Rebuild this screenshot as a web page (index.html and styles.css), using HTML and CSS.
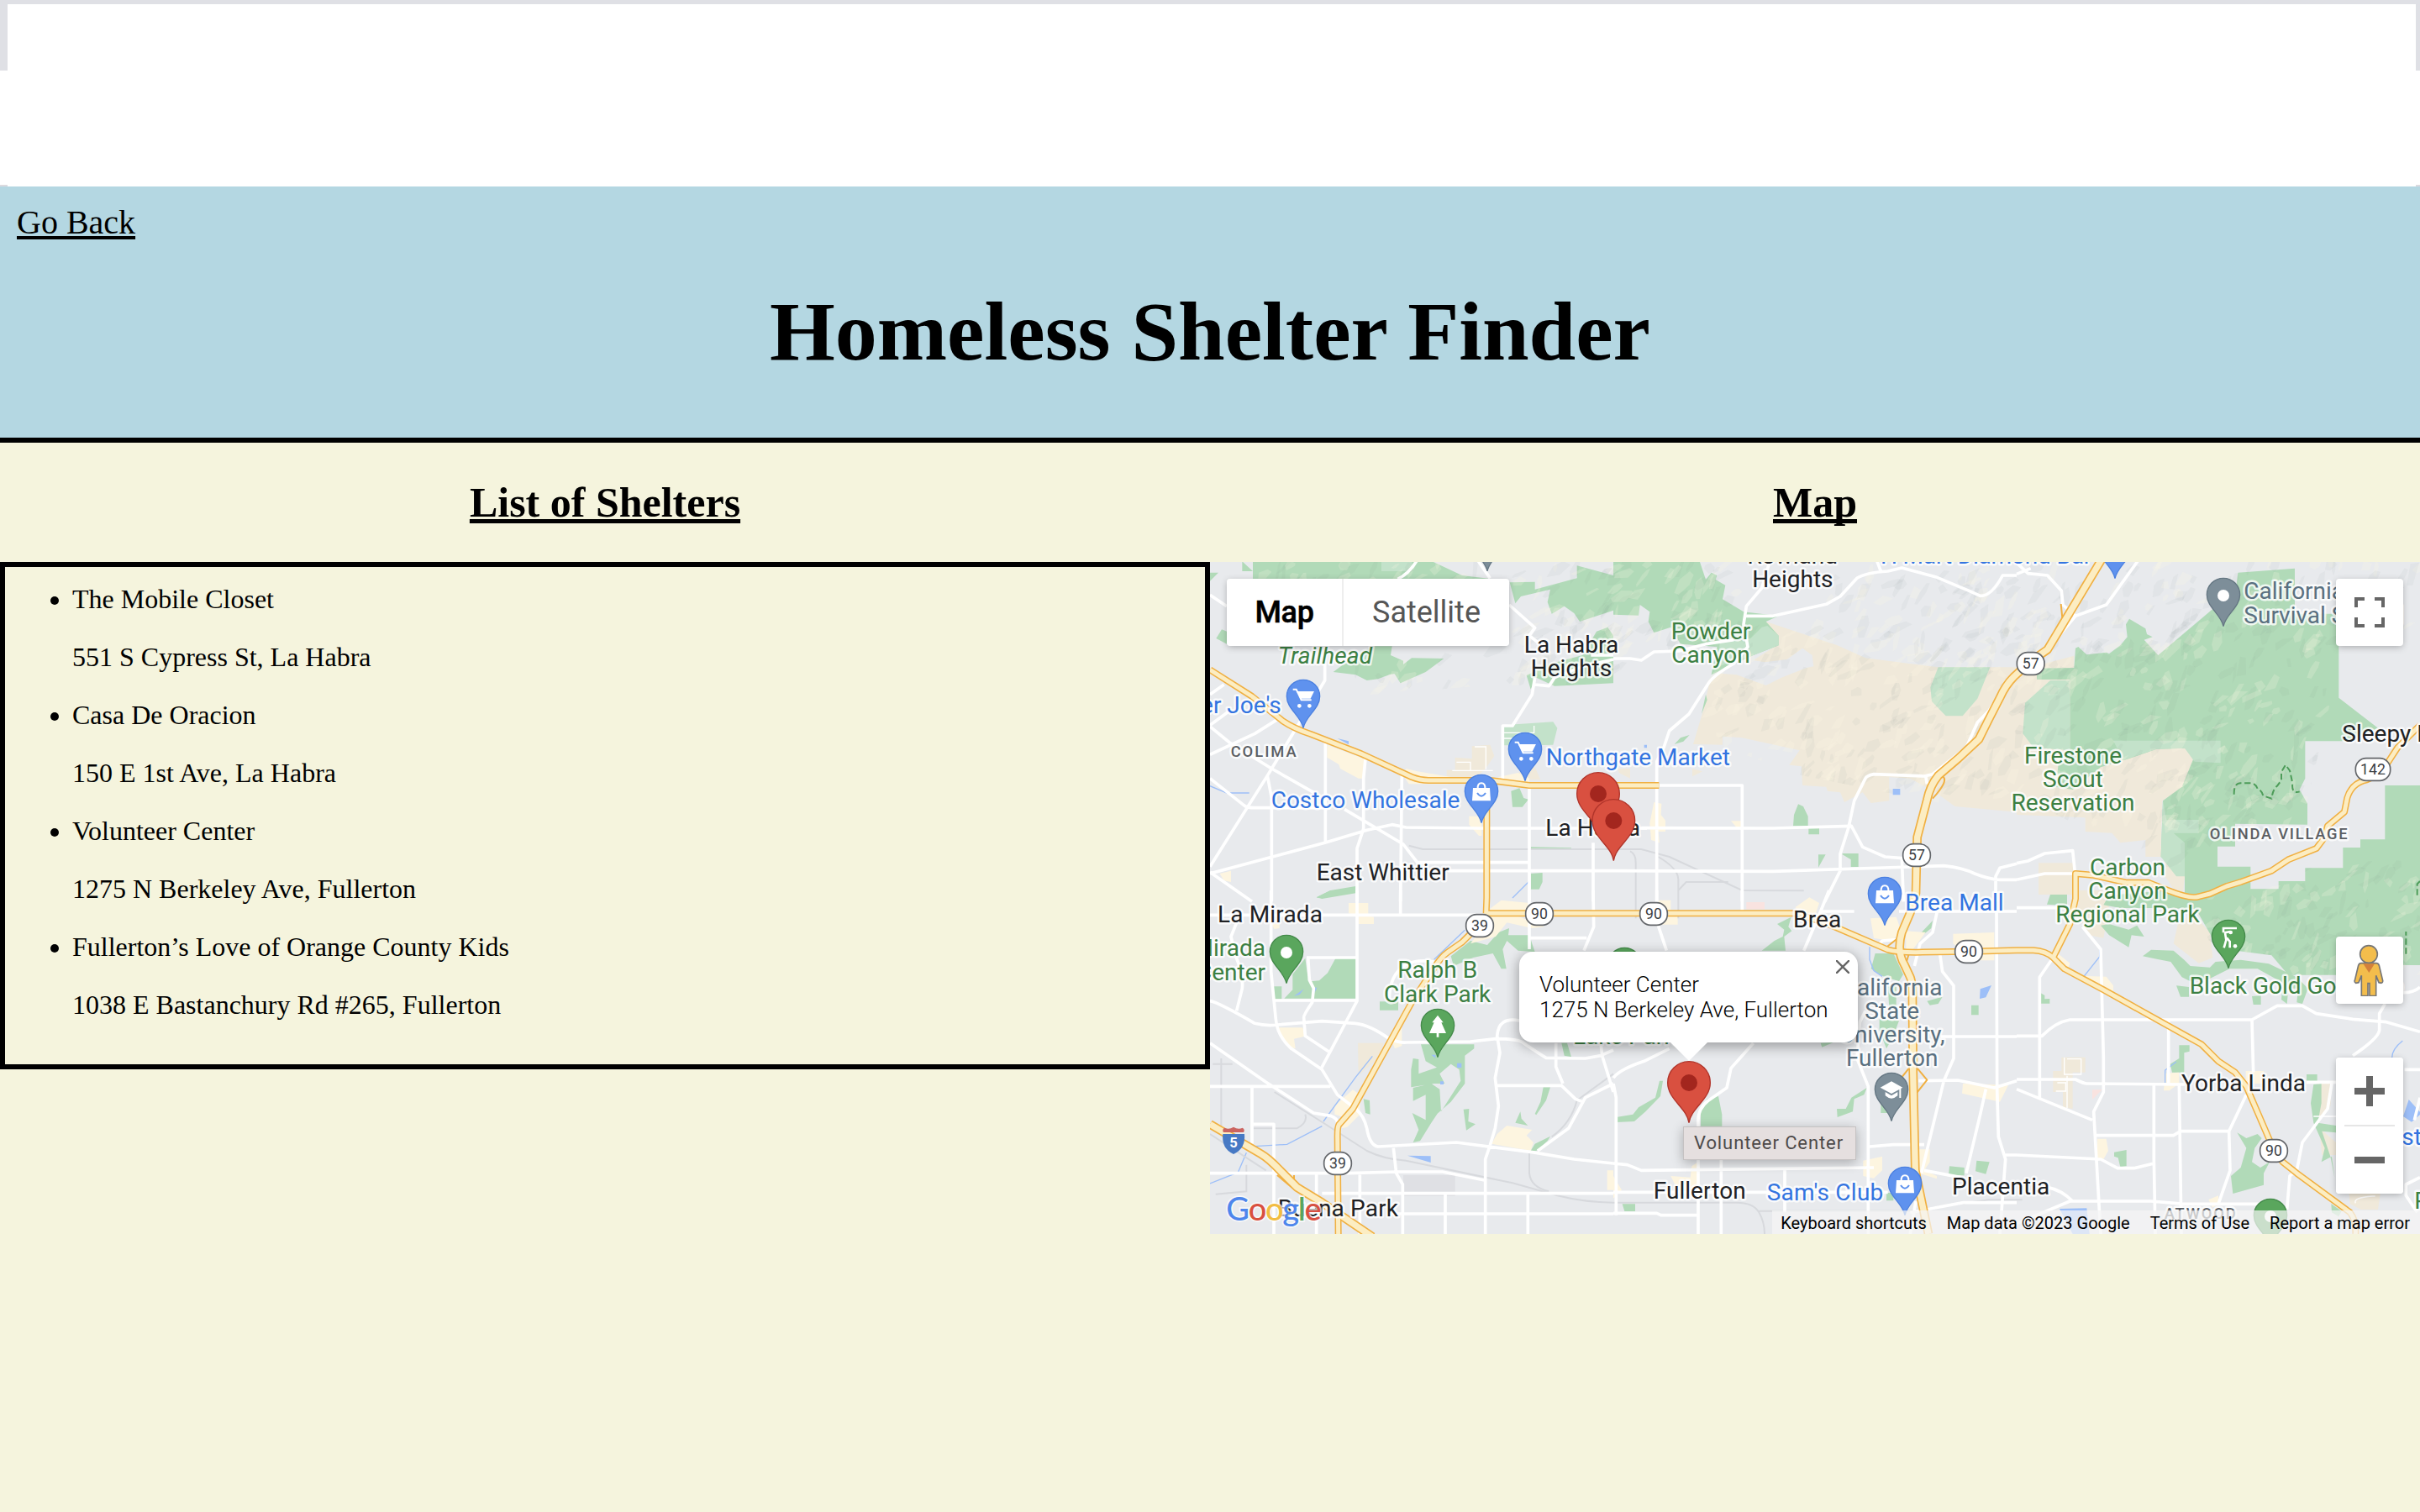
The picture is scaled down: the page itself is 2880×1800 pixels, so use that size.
FILE: index.html
```html
<!DOCTYPE html>
<html lang="en">
<head>
<meta charset="utf-8">
<title>Homeless Shelter Finder</title>
<link rel="stylesheet" href="styles.css">
</head>
<body>
<div class="chrome"><div class="chrome-tabs"></div><div class="chrome-bar"></div></div>
<header class="header">
  <a class="back" href="#">Go Back</a>
  <h1 class="title">Homeless Shelter Finder</h1>
</header>
<main class="columns">
  <section class="column">
    <h2 class="heading">List of Shelters</h2>
    <ul class="shelters">
      <li>The Mobile Closet<p>551 S Cypress St, La Habra</p></li>
      <li>Casa De Oracion<p>150 E 1st Ave, La Habra</p></li>
      <li>Volunteer Center<p>1275 N Berkeley Ave, Fullerton</p></li>
      <li>Fullerton’s Love of Orange County Kids<p>1038 E Bastanchury Rd #265, Fullerton</p></li>
    </ul>
  </section>
  <section class="column">
    <h2 class="heading">Map</h2>
    <div class="map">
      <svg class="map-canvas" viewBox="0 0 4320 2400">
        <defs>
          <clipPath id="hills">
            <path d="M0 0H4320V380L4000 500L3900 930L3400 1100L3000 890L2600 860L2100 760L1780 640L1500 440H1000L500 480L400 300L0 250Z"/>
            <path d="M4320 798H4195V991H4107V1020H4045V1093H3910V1140L3600 1190L3440 1240L3600 1380L3790 1405L3850 1475H4320Z"/>
          </clipPath>
          <path id="r-whittier" d="M0 385L150 480L260 568Q300 595 360 615L540 685L720 768Q750 780 780 780H1000L1140 798H1603"/>
          <path id="r-beach" d="M988 840V1200L986 1255"/>
          <path id="r-90" d="M985 1255H2090L2200 1290L2420 1385Q2450 1394 2520 1394L2710 1391L2880 1387H2940Q2985 1390 3010 1413L3050 1453L3190 1528L3540 1723L3600 1783L3660 1823L3700 1873L3780 2058Q3800 2110 3830 2143L3880 2183L4070 2323Q4092 2350 4090 2400"/>
          <path id="r-142" d="M3010 1413L3070 1293L3090 1203V1113L3150 1118L3270 1145H3350L3420 1173Q3500 1205 3530 1195L3570 1185L3630 1158L3680 1143L3790 1103L3850 1063L3950 1023L3980 983L3990 943L4050 893L4060 843Q4075 790 4130 778L4180 755L4240 663L4320 583"/>
          <path id="r-57" d="M3190 -20L3080 163L2990 313L2930 355L2870 410Q2840 440 2820 485L2780 563L2745 633L2670 703L2600 763Q2570 800 2560 850L2525 983L2520 1183L2500 1253L2470 1323Q2450 1390 2480 1440L2500 1483Q2508 1500 2508 1573L2510 1813L2518 2173L2565 2400"/>
          <path id="r-39" d="M960 1298L900 1358L850 1393Q825 1410 800 1450L720 1573L510 1953L460 2010Q455 2018 455 2050L458 2400"/>
          <path id="r-5" d="M0 2008L180 2113Q210 2130 250 2173L310 2233L400 2288L580 2410"/>
          <g id="cart"><path d="M-37-25H-25L-7 13H29M-23-15H34L24 5H-12" class="ico-line"/><path d="M-20-15H33L24 6H-12Z" class="ico"/><circle class="ico" cx="-14" cy="34" r="7"/><circle class="ico" cx="22" cy="34" r="7"/></g>
          <g id="bag"><path class="ico" d="M-30-12H30L33 34H-33Z"/><path class="ico-line" d="M-13-10Q-14-29 0-29T13-10"/><path class="bag-smile" d="M-15 6Q0 28 15 6"/></g>
          <path id="poi" d="M0 113C-8 70-59 45-59 0A59 59 0 0 1 59 0C59 45 8 70 0 113Z"/>
          <g id="marker"><path d="M0 143C-7 90-76 60-76 0A76 76 0 0 1 76 0C76 60 7 90 0 143Z"/><circle class="marker-dot" r="30"/></g>
        </defs>

        <!-- built-up areas -->
        <g class="tan">
          <path transform="translate(1440 -27)" d="M450 205L480 225L545 240L800 325L900 370L1160 403H1440V920L1220 900L1150 850L1060 800L985 795V880L920 888L890 850L825 885L810 850L765 845L760 830L675 825L672 757L628 752L665 700L460 655L390 650V680L285 678L320 560L345 450L380 425L440 430L545 468L600 440L690 405L715 400L710 360L675 335L620 375L540 385L500 378L590 320L560 270L435 240Z"/>
          <path transform="translate(2880 -27)" d="M0 430L100 390L205 362L205 405L320 640L640 700L600 830L520 880L515 1040L600 1150L590 1240L530 1150V1080H460V1020L370 1030L340 995L245 990V940L0 930ZM78 1102H205V1215H78Z"/>
          <path transform="translate(0 -27)" d="M845 770H875V725L935 730V685L1000 680L1015 720L980 770L940 800L845 795ZM1100 780L1160 760L1180 805H1100Z"/>
          <path transform="translate(1440 -27)" d="M15 765H60V800L20 780ZM282 765L318 775L282 793Z"/>
          <path transform="translate(2880 1173)" d="M205 0H340L310 170L260 160L230 110ZM580 100L640 95L690 150L700 240L650 260L560 190ZM160 596H245V650H200V780L165 775V720H130V645H160ZM1075 690H1125L1120 770L1060 830L1140 900V945H1090L1080 850ZM1185 1070H1300L1290 1140H1230L1190 1120Z"/>
          <path transform="translate(0 1173)" d="M528 545H620L600 600L530 660Z"/>
        </g>
        <g class="green">
          <path transform="translate(0 -27)" d="M153 0H740L900 75L1000 87H153ZM115 25L153 60H115ZM0 65H30L0 95ZM1070 100L1160 98V125L1310 85V40L1440 75V200L1320 240L1300 210L1265 185L1220 212L1205 170L1215 125L1110 150L1090 175ZM440 420L500 375L580 328H650L645 360L690 380L690 420L640 430L600 445L560 450L520 430ZM655 420L720 370L835 372L770 420L680 460ZM22 300L42 268L60 275V320ZM1130 432L1210 392L1330 360L1380 275L1420 260L1440 290V460L1230 470L1165 440L1145 482ZM1075 845L1105 835L1120 870L1137 875L1115 902H1080ZM1146 1140L1187 1137V1170L1175 1196H1146ZM380 1225L430 1200L520 1185V1210L400 1230ZM1145 1045L1290 1048V1053H1145Z"/>
          <path transform="translate(1440 -27)" d="M0 0H300L330 90L350 65L370 75L365 90L400 110L390 160L465 205L590 220L545 240L590 290V325L500 360L350 430L370 330L240 320L205 260L145 280L125 240L130 205L95 180L90 218L0 215ZM642 970L645 930L660 892L678 900L695 935V970H735V1000H697V970ZM732 1072H758L732 1118ZM818 1068H875V1116H848V1090L818 1072ZM315 570L330 500L335 520ZM218 678L240 655L272 645L250 668Z"/>
          <path transform="translate(2880 -27)" d="M205 405L210 335L220 330L250 358L320 350L330 355L370 325L395 295L390 250L402 230L460 265L465 285L485 295L455 305L505 360L700 195L780 150L790 65L993 50V212H1150V512L1290 620L1180 667H1030V800L1010 840L1038 890V965L780 962V1043L717 1043V1115H835V1195L700 1240H600V1150L515 1080L522 880L590 830L635 720L600 692L500 695L400 730L300 760L200 840L140 830L150 740L190 690V447H72V407Z"/>
          <path d="M4320 798H4195V991H4107V1020H4045V1093H3910V1140H3815V1168H3700L3560 1210L3400 1175L3210 1190L3190 1225L3250 1236H3400L3520 1240L3600 1380L3790 1405L3850 1475L4020 1475V1440H4320Z"/>
          <path transform="translate(2880 1173)" d="M300 125L330 120L400 140L430 125L455 165L410 160L400 203L330 160ZM450 235L480 212L560 215L600 250L620 270L690 275L710 255L800 248L900 262L1000 310L1040 350L1020 405L1000 400L1005 350L970 350L965 405L945 390L950 330L860 280L760 280L690 315L620 325L590 310L550 255L500 245ZM570 340L615 345V380H585ZM840 378L872 376V408H845ZM85 366L100 375V388L118 387V404H87ZM120 15H180V54L108 50ZM580 553H617V575L598 580V650H555L548 620L580 600ZM787 865L820 885L860 870L875 885L850 920L840 970L870 990L903 970L882 1010V1052L772 1083L765 1020L800 990L820 920ZM348 935L392 927V985L370 988L362 955L348 950ZM1035 657H1073V685H1035ZM1060 693L1088 690V760L1075 830L1140 840V865L1090 860L1120 950L1135 1025L1125 950L1088 970L1100 920L1060 830L1050 760ZM1123 1120L1160 1145L1150 1165L1125 1150Z"/>
          <path transform="translate(0 1173)" d="M340 242L348 300L360 325L390 322L420 295L448 243H522V386H265L295 355V300ZM226 343H256V388H226ZM606 397H672V428H606ZM860 235L930 180L990 195L1030 150L1068 135L1065 160H1140L1160 220L1100 215L1060 180L1045 210L1058 280L1040 280L1010 225L940 240L870 270ZM753 550H943V565L910 590V690L860 755L812 797L790 830L750 895L725 900L745 855L722 795L770 820V730L725 752V705L790 690L820 710L825 790L895 680L890 640L860 620L820 655L838 690L800 690L718 703V640L725 600L745 603V655L810 632L770 610ZM548 745L570 750L572 800L555 795ZM905 782L925 780L922 825L948 835L915 857ZM1090 830L1108 790L1112 815L1135 840ZM1190 703H1215L1200 750L1165 802L1160 798L1180 755ZM1145 930L1160 905L1215 878L1205 895L1165 930ZM1255 545H1275L1290 595L1265 590ZM380 25L430 0H520V5L400 28Z"/>
          <path transform="translate(1440 1173)" d="M585 120L635 95L625 130L637 145L610 165L615 215H530L575 180L605 165L610 140ZM1100 150L1140 108L1135 135L1110 155ZM920 280L935 225H1000L1035 300L1020 325L960 305ZM1120 395L1175 380L1160 405L1130 410ZM1278 410H1304V445H1278ZM950 460L1020 465L1000 520L975 565L950 500ZM980 340H1010V420H985ZM798 780H830L850 740L905 705L895 730L860 745L855 790L800 810ZM740 545L785 543L745 560ZM955 745H995V795H955ZM312 785L335 745L375 735L388 800V842H312ZM10 810L70 800L90 775L150 740L165 680H177L168 735L115 790L75 825L10 828ZM1200 985L1253 990V1018H1197ZM1297 965L1343 970L1330 1013L1293 1003ZM32 1120H78V1146H40ZM975 1080H1000V1108H975Z"/>
        </g>
        <g class="green-lit">
          <path transform="translate(1440 -27)" d="M1160 403H1345L1300 515L1247 577H1187L1137 525L1132 475ZM550 255L590 290V325L500 360L375 400L380 310L490 300L530 260Z"/>
          <path transform="translate(2880 -27)" d="M120 450H190V700L60 690L22 640L30 530ZM345 665H728V745L635 740L600 692L500 695L380 735ZM522 880L535 948H650V995H560L600 1030V1150L570 1150L515 1080Z"/>
          <path transform="translate(0 -27)" d="M612 0H720L720 60H612ZM1045 610L1225 598L1240 620L1225 680L1160 682H1045Z"/>
        </g>
        <g class="cream">
          <path transform="translate(0 -27)" d="M418 680L550 730L548 800L530 800L465 765L460 750L418 725ZM700 765L740 775L860 795L850 820H710L690 790ZM1030 795L1100 780L1140 800V825L1030 815ZM925 935H970V1005H960L925 965ZM35 1140L75 1130V1170L50 1165Z"/>
          <path transform="translate(1440 -27)" d="M145 885L172 890L170 930L186 950V990L160 990L165 1030L135 1020L130 960ZM420 952H465V970L440 975Z"/>
          <path transform="translate(0 1173)" d="M495 45H565V90L585 95V120H530V90L495 82ZM1000 65L1040 35L1140 45V70L1000 95ZM1000 95L1080 85L1195 130L1150 135L1060 115L1020 165L930 190L950 165L1000 160ZM245 490H330L345 520L300 530L305 565L280 560L255 520ZM445 770L510 712L535 730V800L490 845L470 850L480 810L445 800ZM645 530L685 490V555L660 565ZM1005 905L1025 870L1060 840L1150 855L1130 875L1155 900L1145 930ZM220 120H248V135L230 138ZM1418 1000H1440V1070H1418Z"/>
          <path transform="translate(1440 1173)" d="M650 60L700 25L735 45L720 90L655 75ZM918 100L1010 95L1030 150L990 180L930 170ZM1045 145L1115 150L1070 210L1045 215ZM1213 155L1360 150V250L1290 250L1213 190ZM160 35H205V90H230V122H170ZM1248 690L1410 695L1380 755L1245 725ZM892 965L960 950V1000L930 1028L892 1020ZM1085 925H1130V970L1110 1000L1155 1020V1030L1090 1010ZM205 1020L275 1025L280 985L303 970V1070H230ZM0 1020L30 1070L0 1100Z"/>
          <path transform="translate(2880 1173)" d="M225 305L320 308L345 340V370L240 320ZM140 220L190 260L180 290L130 250ZM530 653L580 650V690L545 715H525ZM818 645H882V690H818ZM288 887H320L327 930L310 960L288 955ZM685 1105L720 1090V1120L700 1133Z"/>
        </g>
        <g class="pink"><path d="M1915 1215H1980V1240H1915ZM3150 1885H3185L3150 1920Z"/></g>
        <g id="relief" clip-path="url(#hills)"></g>
        <g class="water"><path d="M2438 810H2464V832H2438ZM3033 2310L3130 2308L3140 2400H3080ZM705 2120L788 2122V2145ZM1550 653H1560V664H1550ZM300 1550L335 1525L320 1545ZM365 1520H382L370 1545ZM2750 1525L2790 1512L2770 1555L2748 1560ZM4280 1920L4325 1970L4290 2000L4260 1980ZM790 1760H805V1772ZM882 1790H898V1806H882ZM822 1855H834V1866H822ZM455 630L495 640V652Z"/></g>
        <g class="stream"><path d="M405 1998L520 1840L580 1765M130 2110L100 2180L0 2220M160 2087L275 2080L400 2015M800 1420L910 1315M3120 1480L3176 1410V1375M4220 1770Q4220 1740 4258 1710M3410 1860V1815L3450 1785M2355 1375V1420L2370 1460L2400 1480M0 800L60 825H140M1080 1200L1140 1140"/></g>

        <g class="rail">
          <path transform="translate(0 -27)" d="M710 1040L760 1053H1540L1640 1080L1900 1200L2120 1201M1500 1060Q1520 1070 1520 1100V1300M1600 1080Q1670 1120 1672 1160V1300M1672 1200L1700 1170H1850"/>
          <path transform="translate(0 1173)" d="M230 720L420 840L560 930Q620 960 700 965L1080 1045L1240 1090Q1340 1115 1440 1115H1880Q1940 1115 1960 1150T1980 1227M1140 935V1010Q1145 1060 1210 1075M1440 655L1310 750Q1290 830 1220 880M40 600V840M80 620L10 620M155 850H310Q350 830 340 800M0 870L200 1000M130 980V1075L20 1085M1960 1145H2500L2780 1105H2900"/>
        </g>
        <rect class="block" x="690" y="2190" width="185" height="75"/>

        <g class="road">
          <path transform="translate(0 -27)" d="M0 145L60 185M740 20Q710 70 670 88M955 20L1000 85M1068 180L1160 262L1140 290L1190 330M1440 360L1360 360M1160 440L1150 500L1080 612H1045V805M1160 465L1210 470L1230 440L1330 400L1440 375M410 390V450L320 600L205 790L0 1115M0 500L50 465M0 610L75 555M0 715L160 640L240 590M0 615L70 672L220 765L370 850M0 800L120 895Q130 905 160 905H430M205 790L220 870V1240M412 665V1025M555 730L548 800V980L525 1050V1240M685 790L680 1240M0 1140L410 1030L560 985L650 965L700 975L960 978H1560M480 910L690 1035L740 1100H1140M850 1130H1440M1140 830V1240M1368 1030V1240M0 1135L150 1240"/>
          <path transform="translate(1440 -27)" d="M560 20L530 120L475 185L465 250L480 330L430 390Q360 430 340 460L270 570L200 630L180 690L155 740V1240M0 372H60L100 378L145 348L235 345L330 320L430 305M465 220H570L760 178L810 150L870 85Q900 65 980 60L1030 48L1150 80L1270 130L1310 148Q1350 150 1390 75H1440M940 20L955 60M1440 430L1390 480L1340 560L1300 600L1260 690L1140 785L1110 792L930 785Q905 790 900 800L860 880L840 975L810 1070V1130L755 1240M165 825H460V1240M100 977L570 978L850 970L890 1045L970 1080L1030 1085L1036 1240M0 1130L570 1132L1180 1112Q1250 1120 1290 1140Q1340 1160 1380 1162H1440M1115 790L1120 820M1440 1105L1380 1120L1365 1150V1240"/>
          <path transform="translate(2880 -27)" d="M0 30L40 68L110 75L160 130L165 180L210 220L320 180L435 20M0 70L50 50M210 220L160 280M0 1103L40 1095L100 1068L200 1058L208 1135M0 1162L100 1140H200"/>
          <path transform="translate(0 1173)" d="M0 88H985M95 115L75 165L90 230Q120 300 115 350L95 430M218 0V290L235 460Q240 520 290 565L400 640L455 730L520 780Q550 805 560 850Q570 910 600 915L880 900L1150 935L1300 960L1440 975M525 0V395L480 480L395 640M345 240H525M225 393H525M350 240L355 320L370 350L365 400Q330 450 335 455L340 520L430 580M0 395Q30 400 160 475Q200 485 240 480L400 467L520 475Q570 480 640 530Q680 545 700 543L930 540L1020 530Q1100 530 1120 545T1200 598L1340 600L1395 590L1440 570M680 0V85M640 390Q640 300 700 265Q740 245 800 255M1140 0V210M1140 170H1345M1368 0L1370 130L1335 215M0 545L200 685L370 795L430 805Q460 815 455 840M0 700H430M150 700V905M155 835H228V1227M0 1010H500L670 1005H830L980 1035M655 920L665 1010L688 1050V1227M380 1010V1227M535 1010V1227M400 1082H1440M640 1155H1440M840 1082V1227M1000 910L983 960V1227M1135 1082V1227M1105 465Q1030 450 1025 520L1035 580L1018 670L1030 770L1018 850L1000 910M1025 697H1255L1305 745L1330 755M1235 545V630L1260 690M1395 545L1400 590L1440 720M1440 690L1340 740L1280 850L1170 930"/>
          <path transform="translate(1440 1173)" d="M155 0V110L190 215M460 0V75M770 0L740 75L680 215M740 75H860M1020 75H1440M0 670Q20 640 110 610L200 565M500 545L420 635L405 705L340 750Q300 780 303 830V1227M385 950V1227M0 690L10 740V1160M0 975L50 980L100 1000L930 990M0 1078H980M0 1153H155L170 1160H305M612 1000V1150M910 1227V700L870 600L880 470L900 430M1155 80L1140 150L1095 190L1075 270M940 205L960 180L1020 175M1165 220L1175 290L1215 340V600L1180 680L1100 1010M1368 80L1370 710M1440 522H1170M1090 680L1230 678L1360 705L1440 680M1330 710L1310 800L1260 1010M1370 710L1375 880L1400 960L1380 1227M1440 945H1400M915 915L1000 908H1110M1110 1000L1240 1025M1060 1150L1250 1115H1440M1060 1227L1080 1110"/>
          <path transform="translate(2880 1173)" d="M0 62H160M235 130L300 210L310 600V720L275 790L300 1227M130 240L82 310V740M0 520H90Q140 470 190 462H840L930 412H1020L1070 440L1200 460L1320 470L1440 505M1315 405L1295 440V500Q1290 530 1200 590M1380 365Q1420 365 1440 345M542 465V690M840 460L845 650M0 675H210Q240 690 250 690L600 693M1035 685H1140M0 710L270 820M280 875H560L585 860H758M820 730L758 860L762 1000L720 1120M490 693V960L495 1227M580 690L588 1227M0 945L300 960L360 992H420L490 975M1125 690L1110 780L1020 900L1000 1000L975 1020L965 1140M1385 640H1440M1440 740L1420 820M110 1060Q160 1070 200 1110M0 1190L190 1110H480L600 1120H880M1440 1025L1390 1050V1090L1430 1150"/>
        </g>
        <g class="lane"><path d="M1048 610H1157V585M1048 630H1157M865 745H1010M880 715H930V745M945 660H985V740M3050 1770V1830H3110V1775H3060M3025 1860H3055V1890H3020M3060 1835V1950M3940 1980H4020M4090 2290Q4080 2270 4150 2265H4160"/></g>

        <g class="hwy-edge"><use href="#r-whittier"/><use href="#r-beach"/><use href="#r-142"/><use href="#r-90"/><use href="#r-39"/><path d="M2615 765Q2640 780 2580 845M3038 150L3045 220M2410 1380L2460 1340M2495 1400L2480 1450M2470 1840L2510 1790L2560 1850L2520 1900M240 2190L300 2240V2190"/></g>
        <g class="hwy-edge wide"><use href="#r-57"/><use href="#r-5"/></g>
        <g class="hwy"><use href="#r-whittier"/><use href="#r-beach"/><use href="#r-142"/><use href="#r-90"/><use href="#r-39"/></g>
        <g class="hwy wide"><use href="#r-57"/><use href="#r-5"/></g>
        <path class="trail" d="M3656 830Q3655 790 3680 790H3720Q3735 795 3740 810Q3755 815 3760 835L3790 845Q3795 810 3810 800L3825 780V750L3840 725L3855 745L3865 790Q3860 830 3890 820M4310 1190V1150L4320 1140M4270 1400V1320"/>

        <!-- labels -->
        <g class="label">
          <g class="park">
            <text class="it" x="242" y="363" textLength="337">Trailhead</text>
            <text class="mid" x="1788" y="275">Powder</text><text class="mid" x="1788" y="359">Canyon</text>
            <text class="mid" x="3081" y="719">Firestone</text><text class="mid" x="3081" y="803">Scout</text><text class="mid" x="3081" y="887">Reservation</text>
            <text class="mid" x="3276" y="1118">Carbon</text><text class="mid" x="3276" y="1202">Canyon</text><text class="mid" x="3276" y="1286">Regional Park</text>
            <text class="end" x="198" y="1408">La Mirada</text><text class="end" x="198" y="1493">Golf Center</text>
            <text class="mid" x="812" y="1486">Ralph B</text><text class="mid" x="812" y="1571">Clark Park</text>
            <text x="1296" y="1723">Lake Park</text>
            <text x="3497" y="1541">Black Gold Golf Club</text><text x="4300" y="2311">P</text>
          </g>
          <g class="shop">
            <text class="end" x="254" y="539">Trader Joe's</text>
            <text x="218" y="878" textLength="674">Costco Wholesale</text>
            <text x="1199" y="727" textLength="658">Northgate Market</text>
            <text x="2394" y="5" textLength="754">H Mart Diamond Bar</text>
            <text x="2482" y="1244" textLength="352">Brea Mall</text>
            <text x="1988" y="2279" textLength="416">Sam's Club</text>
            <text x="4255" y="2081">st</text>
          </g>
          <g class="civic">
            <text x="3691" y="133">California</text><text x="3691" y="218">Survival School</text>
            <text class="mid" x="2435" y="1547">California</text><text class="mid" x="2435" y="1631">State</text><text class="mid" x="2435" y="1716">University,</text><text class="mid" x="2435" y="1800">Fullerton</text>
          </g>
          <g class="city">
            <text class="mid" x="1290" y="325">La Habra</text><text class="mid" x="1290" y="409">Heights</text>
            <text x="380" y="1136" textLength="474">East Whittier</text>
            <text x="1198" y="978" textLength="338">La Habra</text>
            <text class="mid" x="2080" y="5">Rowland</text><text class="mid" x="2080" y="89">Heights</text>
            <text x="4042" y="643">Sleepy Hollow</text>
            <text x="27" y="1286" textLength="375">La Mirada</text>
            <text x="242" y="2336" textLength="430">Buena Park</text>
            <text x="2082" y="1304" textLength="172">Brea</text>
            <text x="1583" y="2274" textLength="330">Fullerton</text>
            <text x="2649" y="2259" textLength="349">Placentia</text>
            <text x="3468" y="1891" textLength="444">Yorba Linda</text>
          </g>
          <g class="hood">
            <text x="74" y="696" textLength="234">COLIMA</text>
            <text x="3569" y="991" textLength="492">OLINDA VILLAGE</text>
            <text x="3407" y="2345" textLength="255">ATWOOD</text>
          </g>
        </g>

        <g class="shield">
          <rect x="2474" y="1007" width="98" height="80" rx="38"/><text x="2523" y="1066">57</text>
          <rect x="2881" y="323" width="98" height="80" rx="38"/><text x="2930" y="382">57</text>
          <rect x="4090" y="701" width="124" height="80" rx="38"/><text x="4152" y="760">142</text>
          <rect x="914" y="1259" width="98" height="80" rx="38"/><text x="963" y="1318">39</text>
          <rect x="1127" y="1217" width="98" height="80" rx="38"/><text x="1176" y="1276">90</text>
          <rect x="1535" y="1217" width="98" height="80" rx="38"/><text x="1584" y="1276">90</text>
          <rect x="2660" y="1352" width="98" height="80" rx="38"/><text x="2709" y="1411">90</text>
          <rect x="3749" y="2063" width="98" height="80" rx="38"/><text x="3798" y="2122">90</text>
          <rect x="407" y="2108" width="98" height="80" rx="38"/><text x="456" y="2167">39</text>
        </g>
        <g class="interstate"><path class="is-red" d="M48 2037Q42 2027 52 2021Q68 2028 84 2018Q100 2028 116 2021Q126 2027 120 2037Z"/><path class="is-blue" d="M46 2043H123Q128 2095 84 2115Q40 2095 46 2043Z"/><text x="84" y="2092">5</text></g>

        <g class="poi-blue">
          <g transform="translate(333 480)"><use href="#poi"/><use href="#cart"/></g>
          <g transform="translate(1125 669)"><use href="#poi"/><use href="#cart"/></g>
          <g transform="translate(969 819)"><use href="#poi"/><use href="#bag"/></g>
          <g transform="translate(2409 1185)"><use href="#poi"/><use href="#bag"/></g>
          <g transform="translate(2481 2220)"><use href="#poi"/><use href="#bag"/></g>
          <use href="#poi" transform="translate(3231 -54)"/>
        </g>
        <g class="poi-grey">
          <use href="#poi" transform="translate(990 -80)"/>
          <g transform="translate(3618 117)"><use href="#poi"/><circle class="ico" cy="3" r="21"/></g>
          <g transform="translate(2433 1884)"><use href="#poi"/><path class="ico" d="M-40-7L0-29L40-7L0 15ZM-22 9L0 22L22 9V22Q0 42-22 22ZM28-3H34V30H28Z"/></g>
        </g>
        <g class="poi-green">
          <g transform="translate(273 1392)"><use href="#poi"/><circle class="ico" cy="3" r="21"/></g>
          <g transform="translate(813 1656)"><use href="#poi"/><path class="ico" d="M0-37L20-11H13L30 27H4V41H-4V27H-30L-13-11H-20Z"/></g>
          <g transform="translate(3636 1338)"><use href="#poi"/><path class="golf" d="M-18-14V-30H30M-14-14L6-18M-12-14L-8 12L-16 40M-6 4L5 18V40"/><circle class="ico" cx="8" cy="-15" r="7"/><circle class="ico" cx="24" cy="34" r="7"/></g>
          <g transform="translate(1480 1437)"><use href="#poi"/></g>
          <g transform="translate(3786 2334)"><use href="#poi"/><circle class="ico" cy="3" r="21"/></g>
        </g>
        <g class="marker">
          <use href="#marker" transform="translate(1386 828)"/>
          <use href="#marker" transform="translate(1441 924)"/>
          <use href="#marker" transform="translate(1710 1860)"/>
        </g>
        <text class="logo" x="58" y="2351" textLength="340"><tspan class="g-b">G</tspan><tspan class="g-r">o</tspan><tspan class="g-y">o</tspan><tspan class="g-b">g</tspan><tspan class="g-g">l</tspan><tspan class="g-r">e</tspan></text>
      </svg>

      <div class="types"><button class="type active">Map</button><button class="type">Satellite</button></div>
      <button class="control fullscreen" aria-label="Fullscreen"><svg width="36" height="36" viewBox="0 0 36 36"><path class="fs" d="M2 12V2H12M24 2H34V12M34 24V34H24M12 34H2V24"/></svg></button>
      <button class="control pegman" aria-label="Street View"><svg width="36" height="62" viewBox="0 0 108 186"><path class="peg" d="M27 68H81Q88 68 91 76L104 130Q105 137 99 139L90 137L80 112V185H57V140H51V185H28V112L18 137L8 139Q2 136 4 130L17 76Q20 68 27 68Z"/><path class="peg-scarf" d="M34 70H75L55 102Z"/><circle class="peg" cx="54" cy="36" r="31"/></svg></button>
      <div class="zoom"><button class="zoom-btn" aria-label="Zoom in"><svg width="36" height="36" viewBox="0 0 36 36"><path class="zi" d="M0 14H14V0H22V14H36V22H22V36H14V22H0Z"/></svg></button><hr class="zoom-rule"><button class="zoom-btn" aria-label="Zoom out"><svg width="36" height="36" viewBox="0 0 36 36"><path class="zi" d="M0 14H36V22H0Z"/></svg></button></div>

      <div class="info">Volunteer Center<br>1275 N Berkeley Ave, Fullerton
        <svg class="info-close" width="16" height="16" viewBox="0 0 16 16"><path d="M0 0L16 16M16 0L0 16"/></svg>
      </div>
      <div class="tip">Volunteer Center</div>
      <div class="credits"><span>Keyboard shortcuts</span><span>Map data ©2023 Google</span><span>Terms of Use</span><span>Report a map error</span></div>
    </div>
  </section>
</main>
<script src="relief.js"></script>
</body>
</html>
```
FILE: relief.js
```js
// Scatters small light and dark facets over the hills, leaning along the ridges.
(function () {
  var seed = 7;
  function rnd() { seed = (seed * 16807) % 2147483647; return seed / 2147483647; }
  var layer = document.getElementById('relief');
  // x, y, width, height, facet count
  var zones = [
    [150, 0, 800, 120, 40], [1000, 20, 500, 420, 60], [1400, 0, 500, 300, 70],
    [1780, 230, 1100, 620, 230], [2650, 0, 900, 360, 110], [2880, 300, 1100, 640, 230],
    [3350, 750, 500, 330, 60], [3500, 0, 820, 300, 60], [3400, 1080, 920, 400, 170],
    [500, 330, 900, 160, 25], [2200, 40, 600, 350, 60]
  ];
  zones.forEach(function (z) {
    for (var i = 0; i < z[4]; i++) {
      var cx = z[0] + rnd() * z[2], cy = z[1] + rnd() * z[3];
      var len = 15 + rnd() * 38, wid = 6 + rnd() * 15, a = -1.5 + rnd() * 1.2;
      var n = 4 + Math.floor(rnd() * 3), pts = [];
      for (var k = 0; k < n; k++) {
        var t = (k + rnd() * 0.7) / n * Math.PI * 2;
        var px = Math.cos(t) * len, py = Math.sin(t) * wid;
        pts.push((cx + px * Math.cos(a) - py * Math.sin(a)).toFixed(0) + ',' + (cy + px * Math.sin(a) + py * Math.cos(a)).toFixed(0));
      }
      var p = document.createElementNS('http://www.w3.org/2000/svg', 'polygon');
      p.setAttribute('points', pts.join(' '));
      p.setAttribute('class', rnd() < 0.45 ? 'lit' : 'shade');
      layer.appendChild(p);
    }
  });
})();
```
FILE: styles.css
```css
* { box-sizing: border-box; }
body { margin: 0; min-height: 1800px; background: #f5f4dd; color: #000; font-family: "Liberation Serif", "Times New Roman", serif; }

.chrome { height: 222px; background: #fff; display: flex; flex-direction: column; justify-content: space-between; }
.chrome-tabs { height: 84px; border: solid #dfe0e5; border-width: 5px 5px 0 9px; }
.chrome-bar { height: 2px; border: solid #dcdadf; border-width: 0 5px 0 9px; }

.header { height: 305px; background: #b4d7e2; border-bottom: 6px solid #000; padding: 20px 20px 0; display: flex; flex-direction: column; }
.back { align-self: flex-start; font-size: 40px; line-height: 46px; color: #000; text-decoration: underline; text-decoration-thickness: 4px; text-underline-offset: 3px; text-decoration-skip-ink: none; }
.title { margin: 49px 0 0; text-align: center; font-size: 100px; line-height: 115px; font-weight: 700; }

.columns { display: flex; }
.column { width: 50%; }
.heading { height: 142px; margin: 0; padding-top: 42px; text-align: center; font-size: 50px; line-height: 58px; text-decoration: underline; text-decoration-thickness: 5px; text-underline-offset: 3px; text-decoration-skip-ink: none; }
.shelters { height: 604px; margin: 0; padding: 20px 0 0 80px; border: 6px solid #000; font-size: 32px; line-height: 37px; }
.shelters li { margin-bottom: 32px; }
.shelters p { margin: 32px 0 0; }

.map { position: relative; height: 800px; overflow: hidden; background: #e8eaed; font-family: Roboto, sans-serif; }
.map-canvas { display: block; width: 1440px; height: 800px; }
.tan { fill: #f0e9da; }
.green { fill: #b1dab8; }
.green-lit { fill: #c3e2ca; }
.cream { fill: #fdf5e0; }
.pink { fill: #f9e3e0; }
.water { fill: #9dbff8; }
.stream { fill: none; stroke: #9dbff8; stroke-width: 4; }
.lit { fill: #fffbe8; fill-opacity: .2; }
.shade { fill: #6b7a78; fill-opacity: .055; }
.rail { fill: none; stroke: #d7d9dd; stroke-width: 6; }
.block { fill: #dfe0e4; }
.road { fill: none; stroke: #fff; stroke-width: 11; stroke-linejoin: round; }
.lane { fill: none; stroke: #fff; stroke-width: 4; }
.hwy-edge { fill: none; stroke: #f0b042; stroke-width: 24; stroke-linejoin: round; }
.hwy-edge path { stroke-width: 6; }
.hwy-edge use { stroke-width: 24; }
.hwy { fill: none; stroke: #fcedc2; stroke-width: 15; stroke-linejoin: round; }
.hwy-edge.wide use { stroke-width: 32; }
.hwy.wide { stroke-width: 22; }
.trail { fill: none; stroke: #4d9c59; stroke-width: 6; stroke-dasharray: 22 11; }

.label { font-size: 84px; stroke: #fff; stroke-opacity: .8; stroke-width: 15px; stroke-linejoin: round; paint-order: stroke; }
.mid, .shield text, .interstate text { text-anchor: middle; }
.end { text-anchor: end; }
.it { font-style: italic; }
.park { fill: #3c8043; }
.shop { fill: #3374e0; }
.civic { fill: #5a7080; }
.city { fill: #202124; }
.hood { fill: #5b5e63; font-size: 55px; font-weight: 500; }
.shield rect { fill: #fff; stroke: #63666a; stroke-width: 5; }
.shield text { fill: #3c4043; font-size: 53px; }
.is-red { fill: #cb6460; }
.is-blue { fill: #4779c4; }
.interstate text { fill: #fff; font-size: 50px; font-weight: 700; }
.poi-blue { fill: #5f92ee; stroke: #4b80e0; stroke-width: 4; }
.poi-grey { fill: #7d8e99; stroke: #657783; stroke-width: 4; }
.poi-green { fill: #5aa65d; stroke: #448a4a; stroke-width: 4; }
.ico { fill: #fff; stroke: none; }
.ico-line { fill: none; stroke: #fff; stroke-width: 6; }
.bag-smile { fill: none; stroke: #5f92ee; stroke-width: 6; }
.golf { fill: none; stroke: #fff; stroke-width: 8; }
.marker { fill: #d95040; stroke: #b0342a; stroke-width: 4; }
.marker-dot { fill: #a3261e; stroke: none; }
.logo { font-family: Lato, sans-serif; font-size: 114px; font-weight: 500; stroke: #fff; stroke-opacity: .7; stroke-width: 10px; paint-order: stroke; }
.g-b { fill: #4e86ec; }
.g-r { fill: #d95040; }
.g-y { fill: #f2bd42; }
.g-g { fill: #58a55c; }

button { margin: 0; padding: 0; border: 0; background: #fff; font-family: inherit; }
.types { position: absolute; left: 20px; top: 20px; display: flex; height: 80px; border-radius: 4px; overflow: hidden; box-shadow: 0 2px 8px -1px rgba(0, 0, 0, .3); }
.type { width: 197px; font-size: 36px; color: #565656; }
.type.active { width: 139px; color: #000; font-weight: 500; letter-spacing: -.3px; -webkit-text-stroke: .5px #000; border-right: 2px solid #eee; }
.control { position: absolute; right: 20px; width: 80px; height: 80px; display: flex; align-items: center; justify-content: center; border-radius: 4px; box-shadow: 0 2px 8px -1px rgba(0, 0, 0, .3); }
.fullscreen { top: 20px; }
.pegman { top: 446px; padding-right: 2px; }
.fs { fill: none; stroke: #666; stroke-width: 4; }
.peg { fill: #f3bd4c; stroke: #777; stroke-width: 5; }
.peg-scarf { fill: #d3803a; }
.zoom { position: absolute; right: 20px; top: 590px; width: 80px; height: 162px; background: #fff; border-radius: 4px; box-shadow: 0 2px 8px -1px rgba(0, 0, 0, .3); overflow: hidden; }
.zoom-btn { display: flex; width: 80px; height: 80px; align-items: center; justify-content: center; }
.zoom-rule { margin: 0 10px; height: 2px; border: 0; background: #e6e6e6; }
.zi { fill: #666; }

.info { position: absolute; left: 368px; top: 464px; width: 403px; height: 108px; padding: 24px 0 0 24px; background: #fff; border-radius: 16px; box-shadow: 0 4px 14px 2px rgba(0, 0, 0, .3); font-size: 26px; line-height: 30px; font-weight: 300; white-space: nowrap; }
.info::after { content: ""; position: absolute; left: 179px; top: 107px; width: 46px; height: 23px; background: #fff; clip-path: polygon(0 0, 100% 0, 50% 100%); }
.info-close { position: absolute; right: 10px; top: 10px; }
.info-close path { fill: none; stroke: #666; stroke-width: 2.4; }
.tip { position: absolute; left: 563px; top: 672px; width: 206px; height: 40px; padding-right: 2px; border: 1px solid #c5c2c2; background: #e5dfdf; color: #4d4a4a; font-size: 22px; line-height: 38px; letter-spacing: .9px; text-align: center; white-space: nowrap; box-shadow: 0 3px 14px rgba(0, 0, 0, .28); }
.credits { position: absolute; right: 0; bottom: 0; height: 28px; padding: 0 12px 0 10px; display: flex; gap: 24px; background: rgba(245, 245, 245, .72); font-size: 20px; line-height: 30px; white-space: nowrap; }
```
